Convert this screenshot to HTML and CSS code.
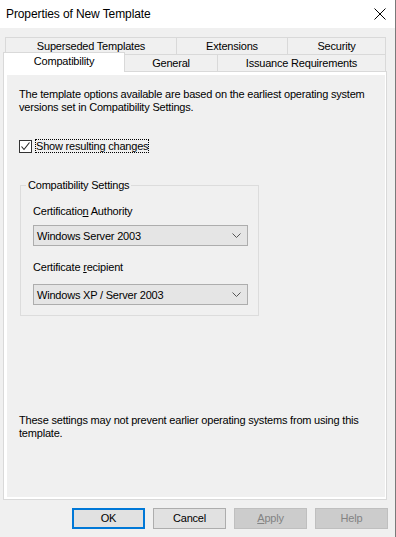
FILE: index.html
```html
<!DOCTYPE html>
<html>
<head>
<meta charset="utf-8">
<link rel="stylesheet" href="styles.css">
</head>
<body>
<div class="window">
  <div class="titlebar">
    <span class="title">Properties of New Template</span>
    <svg class="close" width="12" height="12" viewBox="0 0 12 12"><path d="M0.5 0.5 L11.5 11.5 M11.5 0.5 L0.5 11.5" stroke="#000" stroke-width="1" fill="none"/></svg>
  </div>
  <div class="tabs">
    <div class="tabrow row1">
      <div class="tab t-super">Superseded Templates</div>
      <div class="tab t-ext">Extensions</div>
      <div class="tab t-sec">Security</div>
    </div>
    <div class="tabrow row2">
      <div class="tab t-compat selected">Compatibility</div>
      <div class="tab t-gen">General</div>
      <div class="tab t-iss">Issuance Requirements</div>
    </div>
  </div>
  <div class="panel">
    <div class="page">
      <p class="intro">The template options available are based on the earliest operating system<br>versions set in Compatibility Settings.</p>
      <div class="checkrow">
        <span class="checkbox"><svg width="11" height="11" viewBox="0 0 11 11"><path d="M1.5 5.5 L4 8.5 L9.5 1.5" stroke="#222" stroke-width="1.1" fill="none"/></svg></span>
        <span class="checklabel">Show resulting changes</span>
      </div>
      <fieldset class="group">
        <legend>Compatibility Settings</legend>
        <div class="fieldlabel">Certificatio<u>n</u> Authority</div>
        <div class="combo"><span>Windows Server 2003</span><svg width="9" height="5" viewBox="0 0 9 5"><path d="M0.5 0.5 L4.5 4.5 L8.5 0.5" stroke="#555" stroke-width="1" fill="none"/></svg></div>
        <div class="fieldlabel second">Certificate <u>r</u>ecipient</div>
        <div class="combo second"><span>Windows XP / Server 2003</span><svg width="9" height="5" viewBox="0 0 9 5"><path d="M0.5 0.5 L4.5 4.5 L8.5 0.5" stroke="#555" stroke-width="1" fill="none"/></svg></div>
      </fieldset>
      <p class="note">These settings may not prevent earlier operating systems from using this<br>template.</p>
    </div>
  </div>
  <div class="buttons">
    <div class="btn default">OK</div>
    <div class="btn">Cancel</div>
    <div class="btn disabled"><u>A</u>pply</div>
    <div class="btn disabled">Help</div>
  </div>
</div>
</body>
</html>
```
FILE: styles.css
```css
* { box-sizing: border-box; }
html, body { margin: 0; padding: 0; }
body {
  background: #7a7a7a;
  font-family: "Liberation Sans", Arial, sans-serif;
  font-size: 11px;
  letter-spacing: -0.2px;
  color: #000;
}
.window {
  width: 395px;
  height: 537px;
  background: #f0f0f0;
  display: flex;
  flex-direction: column;
}
.titlebar {
  height: 28px;
  background: #fff;
  display: flex;
  align-items: center;
  justify-content: space-between;
  padding: 0 9px 0 6px;
}
.title {
  font-family: "Liberation Sans", Arial, sans-serif;
  font-size: 12px;
  letter-spacing: -0.1px;
  color: #000;
}
.close { display: block; }
.tabs {
  margin-top: 9px;
  display: flex;
  flex-direction: column;
}
.tabrow {
  display: flex;
  padding-left: 5px;
  height: 17px;
}
.tab {
  height: 17px;
  border: 1px solid #d9d9d9;
  border-bottom: none;
  background: #f0f0f0;
  display: flex;
  align-items: center;
  justify-content: center;
  line-height: 13px;
  white-space: nowrap;
}
.tab + .tab { margin-left: -1px; }
.t-super { width: 172px; }
.t-ext { width: 112px; }
.t-sec { width: 99px; }
.row2 { position: relative; z-index: 1; }
.t-gen { width: 94px; }
.t-iss { width: 169px; }
.t-compat.selected {
  width: 122px;
  height: 20px;
  margin-top: -2px;
  margin-left: -2px;
  background: #fff;
  border-color: #d9d9d9;
  padding-bottom: 3px;
}
.t-compat + .tab { margin-left: -1px; }
.panel {
  margin: 0 8px 0 3px;
  height: 429px;
  border: 1px solid #d9d9d9;
  background: #fff;
  padding: 3px 1px 2px 3px;
}
.page {
  height: 100%;
  background: #f0f0f0;
  padding: 13px 0 0 12px;
  display: flex;
  flex-direction: column;
}
p { margin: 0; line-height: 13px; white-space: nowrap; }
.checkrow {
  margin-top: 25px;
  display: flex;
  align-items: center;
  height: 14px;
}
.checkbox {
  width: 13px;
  height: 13px;
  border: 1px solid #333;
  background: #fff;
  display: flex;
  align-items: center;
  justify-content: center;
}
.checkbox svg { display: block; }
.checklabel {
  margin-left: 3px;
  border: 1px dotted #000;
  height: 14px;
  line-height: 12px;
}
.group {
  margin: 26px 0 0 1px;
  width: 239px;
  border: 1px solid #dcdcdc;
  padding: 0 10px 10px 12px;
}
.group legend {
  padding: 0 2px;
  margin-left: -7px;
  line-height: 13px;
}
.fieldlabel { line-height: 13px; margin-top: 13px; }
.fieldlabel.second { margin-top: 15px; }
.combo {
  margin-top: 7px;
  width: 215px;
  height: 21px;
  background: #e5e5e5;
  border: 1px solid #adadad;
  display: flex;
  align-items: center;
  justify-content: space-between;
  padding: 0 6px 0 3px;
}
.combo.second { margin-top: 10px; }
.combo svg { display: block; }
.note {
  margin-top: auto;
  margin-bottom: 57px;
}
.buttons {
  margin-top: 8px;
  display: flex;
  justify-content: flex-end;
  gap: 8px;
  padding-right: 7px;
}
.btn {
  width: 73px;
  height: 21px;
  background: #e1e1e1;
  border: 1px solid #adadad;
  display: flex;
  align-items: center;
  justify-content: center;
  line-height: 13px;
}
.btn.default { border: 2px solid #0078d7; }
.btn.disabled {
  background: #cccccc;
  border-color: #bfbfbf;
  color: #838383;
}
```
